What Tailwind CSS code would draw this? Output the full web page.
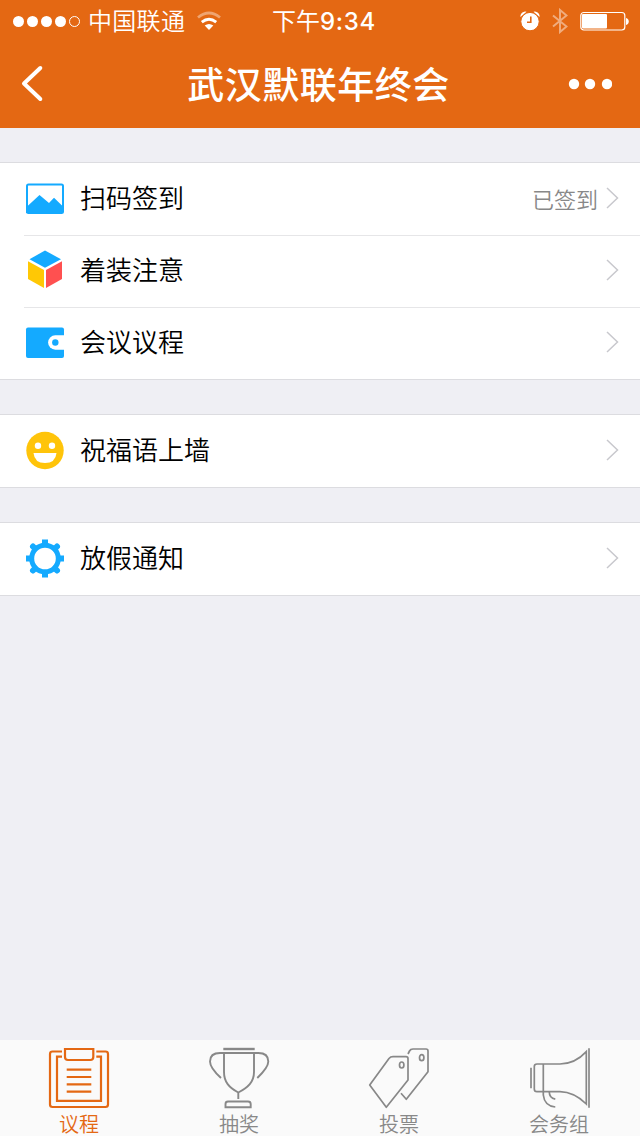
<!DOCTYPE html>
<html lang="zh-CN">
  <head>
    <meta charset="UTF-8" />
    <meta name="viewport" content="width=device-width, initial-scale=1.0" />
    <title>武汉默联年终会</title>
    <script src="https://cdn.jsdelivr.net/npm/@tailwindcss/browser@4"></script>
  </head>
  <body
    class="flex flex-col h-[1136px] w-[640px] overflow-hidden bg-[#efeff4] text-black font-['Inter','Noto_Sans_CJK_SC',sans-serif]"
  >
    <!-- Header -->
    <header class="h-32 shrink-0 bg-[#e46813] text-white">
      <!-- Status Bar -->
      <div class="grid grid-cols-[272px_1fr_auto] h-10 items-center pl-3 pr-2.5">
        <div class="flex items-center">
          <svg class="w-[70px] h-3" viewBox="0 0 70 12" fill="#fff">
            <circle cx="6.5" cy="6.5" r="5.5" />
            <circle cx="20.5" cy="6.5" r="5.5" />
            <circle cx="34.5" cy="6.5" r="5.5" />
            <circle cx="48.5" cy="6.5" r="5.5" />
            <circle cx="62.5" cy="6.5" r="5" fill="none" stroke="#fff" />
          </svg>
          <span class="ml-1.5 pt-0.5 text-2xl leading-10 tracking-[0.3px] font-[350]">中国联通</span>
          <svg class="ml-3 w-6 h-5" viewBox="0 0 24 20" fill="none" stroke="#fff">
            <path d="M1 6.5Q12 -2.5 23 6.5" stroke-width="2.8" opacity=".4" />
            <path d="M4.8 11.2Q12 5.2 19.2 11.2" stroke-width="2.8" />
            <path d="M12 19L7.7 14.6Q12 11.400 16.3 14.600Z" fill="#fff" stroke="none" />
          </svg>
        </div>
        <span class="-ml-3 pt-0.5 text-2xl leading-10">下午<span class="font-medium tracking-[0.7px]">9:34</span></span>
        <div class="flex items-center">
          <svg class="w-5 h-5" viewBox="0 0 20 20">
            <path d="M.5 6A4.600 4.600 0 0 1 6.500 .8ZM19.500 6A4.600 4.600 0 0 0 13.500 .8Z" fill="#fff" />
            <circle cx="10" cy="10.600" r="9.200" fill="#fff" stroke="#e46813" />
            <path d="M10.800 5.500v5.700H7" fill="none" stroke="#e46813" stroke-width="1.600" />
          </svg>
          <svg class="ml-3 w-4 h-[26px]" viewBox="0 0 16 26" fill="none" stroke="#fff" stroke-width="2" opacity=".45">
            <path d="M1 7.5L14.5 18.5L8 24V2L14.5 7.5L1 18.5" />
          </svg>
          <svg class="ml-3 w-[50px] h-5" viewBox="0 0 50 20">
            <rect x=".8" y="1.500" width="44" height="17.500" rx="3" fill="none" stroke="#fff" stroke-width="1.200" />
            <rect x="2" y="3" width="25" height="14.500" rx="1" fill="#fff" />
            <path d="M46 7a3.6 3.6 0 0 1 0 7Z" fill="#fff" />
          </svg>
        </div>
      </div>
      <!-- Title Bar -->
      <div class="grid grid-cols-[80px_1fr_80px] items-center h-22">
        <svg class="ml-5 w-6 h-10" viewBox="0 0 24 40" fill="none" stroke="#fff" stroke-width="4" stroke-linecap="round" stroke-linejoin="round">
          <path d="M20.3 4L4 19.500L20.3 35" />
        </svg>
        <h1 class="pt-[3px] pr-[3px] text-center text-[37px] leading-[84px] tracking-[0.5px] font-medium">武汉默联年终会</h1>
        <svg class="ml-2 w-11 h-3" viewBox="0 0 44 12" fill="#fff">
          <circle cx="6" cy="6" r="5.2" />
          <circle cx="22" cy="6" r="5.2" />
          <circle cx="39" cy="6" r="5.2" />
        </svg>
      </div>
    </header>

    <!-- Menu Groups -->
    <main class="flex flex-1 flex-col gap-[34px] pt-[34px] text-[26px] leading-[70px] font-[350]">
      <ul class="border-y border-[#dcdce0] bg-white pl-6">
        <li class="flex items-center h-18 pr-5">
          <svg class="w-[42px] h-10" viewBox="0 0 42 40">
            <rect x="3" y="5.5" width="36" height="28.5" rx="1.5" fill="#fff" stroke="#14aaff" stroke-width="2" />
            <path d="M2 28.5L15.5 16L25 24L30 18.8L39 27.5V34H2Z" fill="#14aaff" />
          </svg>
          <span class="ml-3.5">扫码签到</span>
          <span class="ml-auto mr-2 pt-px text-[22px] text-[#888]">已签到</span>
          <svg class="mb-0.5 w-3.5 h-6" viewBox="0 0 14 24" fill="none" stroke="#c8c8cd" stroke-width="1.5">
            <path d="M1 2L11.500 12L1 22" />
          </svg>
        </li>
        <li class="flex items-center h-18 pb-px pr-5 border-t border-[#e6e6e8]">
          <svg class="mb-1 w-[42px] h-10" viewBox="0 0 42 40">
            <path d="M21 1.5L37 10.2L21 18.8L5.5 10.2Z" fill="#14aaff" />
            <path d="M4 12.2L20 21V39L4 30Z" fill="#ffc805" />
            <path d="M38 12.2L22 21V39L38 30Z" fill="#ff5050" />
          </svg>
          <span class="ml-3.5">着装注意</span>
          <svg class="ml-auto mb-[3px] w-3.5 h-6" viewBox="0 0 14 24" fill="none" stroke="#c8c8cd" stroke-width="1.5">
            <path d="M1 2L11.500 12L1 22" />
          </svg>
        </li>
        <li class="flex items-center h-18 pb-px pr-5 border-t border-[#e6e6e8]">
          <svg class="mb-px w-[42px] h-10" viewBox="0 0 42 40">
            <rect x="2" y="4.5" width="38" height="30.5" rx="2" fill="#14aaff" />
            <path d="M40 12.3H31.3a7.2 7.2 0 0 0 0 14.4H40Z" fill="#fff" />
            <circle cx="31.3" cy="19.5" r="3.2" fill="#14aaff" />
          </svg>
          <span class="ml-3.5">会议议程</span>
          <svg class="ml-auto mb-[3px] w-3.5 h-6" viewBox="0 0 14 24" fill="none" stroke="#c8c8cd" stroke-width="1.5">
            <path d="M1 2L11.500 12L1 22" />
          </svg>
        </li>
      </ul>

      <ul class="border-y border-[#dcdce0] bg-white pl-6">
        <li class="flex items-center h-18 pr-5">
          <svg class="w-[42px] h-10" viewBox="0 0 42 40">
            <circle cx="21" cy="19.5" r="18.7" fill="#ffc40a" />
            <circle cx="14" cy="14.8" r="3.2" fill="#fff" />
            <circle cx="28" cy="14.8" r="3.2" fill="#fff" />
            <path d="M9.5 22H32.5Q31.5 32 21 32T9.5 22Z" fill="#fff" />
          </svg>
          <span class="ml-3.5">祝福语上墙</span>
          <svg class="ml-auto mb-0.5 w-3.5 h-6" viewBox="0 0 14 24" fill="none" stroke="#c8c8cd" stroke-width="1.5">
            <path d="M1 2L11.500 12L1 22" />
          </svg>
        </li>
      </ul>

      <ul class="border-y border-[#dcdce0] bg-white pl-6">
        <li class="flex items-center h-18 pr-5">
          <svg class="w-[42px] h-10" viewBox="0 0 42 40" fill="none" stroke="#14aaff">
            <circle cx="21" cy="19.5" r="13.3" stroke-width="5" />
            <path d="M21 .5V5M21 34V38.5M2 19.5H6.5M35.5 19.5H40" stroke-width="6" />
            <path d="M9 7.5L11 9.5M33 7.5L31 9.5M9 31.5L11 29.5M33 31.5L31 29.5" stroke-width="6" stroke-linecap="round" />
          </svg>
          <span class="ml-3.5">放假通知</span>
          <svg class="ml-auto mb-0.5 w-3.5 h-6" viewBox="0 0 14 24" fill="none" stroke="#c8c8cd" stroke-width="1.5">
            <path d="M1 2L11.500 12L1 22" />
          </svg>
        </li>
      </ul>
    </main>

    <!-- Tab Bar -->
    <nav class="grid grid-cols-4 h-24 shrink-0 bg-[#fafafa] pt-1.5 text-xl leading-[30px] text-[#888] font-[350]">
      <a href="#" class="flex flex-col items-center text-[#e46813]">
        <svg class="w-16 h-16" viewBox="0 0 64 64" fill="none" stroke="currentColor" stroke-width="2.2">
          <path d="M14 5.5H4.5Q2 5.5 2 8V58.5Q2 61 4.5 61H57.5Q60 61 60 58.5V8Q60 5.5 57.5 5.5H48.3" />
          <path d="M14 10.7H9V54.8H53V10.7H48.3" />
          <path d="M17 3H45.3V11Q45.3 14 42.3 14H20Q17 14 17 11Z" />
          <path d="M18.7 23.7H43.3M18.7 31H43.3M18.7 38.3H43.3M18.7 45.7H43.3" />
        </svg>
        <span class="pr-0.5">议程</span>
      </a>
      <a href="#" class="flex flex-col items-center">
        <svg class="w-16 h-16" viewBox="0 0 64 64" fill="none" stroke="currentColor" stroke-width="1.9">
          <path d="M15.3 3H46.7" stroke-width="2.4" />
          <path d="M13 32C7 26.500 2 21 2 15.500C2 10 5.500 7 12 7H50.300C57 7 60.300 10 60.300 15.500C60.300 21 55 26.500 49.300 32" />
          <path d="M16 7V26C16 36 21 41.500 30.300 46.500C40 41.500 46 36 46 26V7M30.300 46.500V53" />
          <path d="M17.500 61.300V58Q17.500 55.500 20 55.500H40Q42.700 55.500 42.700 58V61.300Z" />
        </svg>
        <span class="pr-0.5">抽奖</span>
      </a>
      <a href="#" class="flex flex-col items-center">
        <svg class="w-16 h-16" viewBox="0 0 64 64" fill="none" stroke="currentColor" stroke-width="1.7" stroke-linejoin="round">
          <path d="M1.700 39L21 12.500Q22.500 10.700 25 10.700H38Q40 10.700 40 12.700V34L18.300 61.300Z" />
          <ellipse cx="33.700" cy="19" rx="2.200" ry="3" />
          <path d="M40 8L41.500 5Q42.500 3 45 3H58Q60 3 60 5V25.700L38.300 53.300L33 47.300" />
          <ellipse cx="53.700" cy="11.700" rx="2.200" ry="3" />
        </svg>
        <span class="pr-0.5">投票</span>
      </a>
      <a href="#" class="flex flex-col items-center">
        <svg class="w-16 h-16" viewBox="0 0 64 64" fill="none" stroke="currentColor" stroke-width="1.7">
          <path d="M3 21.700V42.300M61 2.300V61.700" />
          <path d="M58.300 5.700Q47 18 32 18H9Q6.300 18 6.300 20.500V43Q6.300 45.700 9 45.700H32Q46 46 58.300 58Z" />
          <path d="M15.300 18V49Q16.500 60 27.300 61M21.300 46Q21.300 52 27.300 53.200" />
        </svg>
        <span class="pr-0.5">会务组</span>
      </a>
    </nav>
  </body>
</html>
